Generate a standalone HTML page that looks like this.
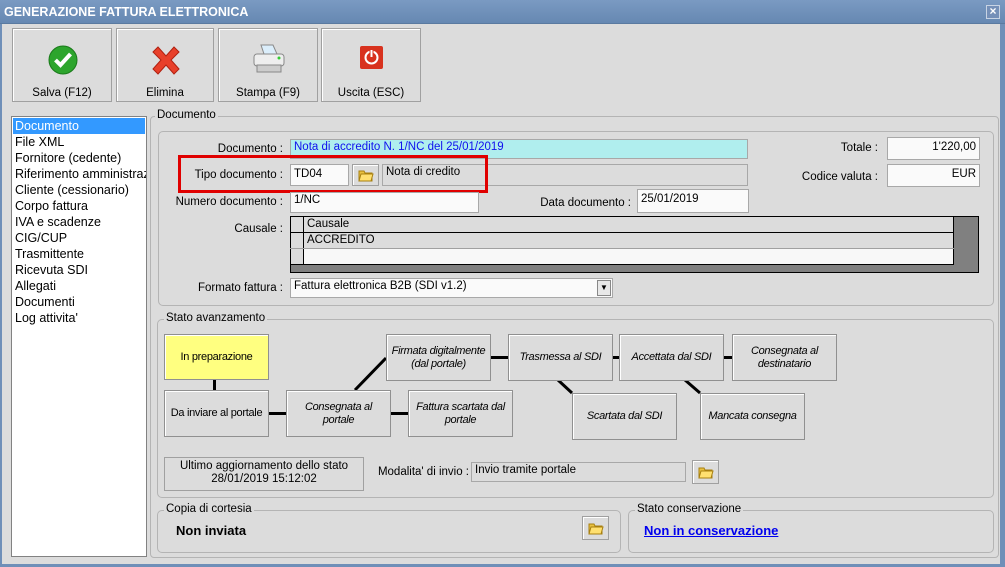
<!DOCTYPE html><html><head><meta charset="utf-8"><style>
*{box-sizing:border-box}body{margin:0;width:1005px;height:567px;overflow:hidden;background:#dcdcdc;font-family:"Liberation Sans",Tahoma,sans-serif;font-size:11.5px;color:#000;position:relative}
.a{position:absolute}
.btn{position:absolute;background:#dcdcdc;border:1px solid #a0a0a0;box-shadow:inset 1px 1px #fff;text-align:center}
.fld{position:absolute;background:#fafafa;border:1px solid #a8a8a8;padding:1px 3px;white-space:nowrap;overflow:hidden}
.lbl{position:absolute;text-align:right;white-space:nowrap}
.grp{position:absolute;border:1px solid #b4b4b4;border-radius:5px}
.gl{position:absolute;background:#dcdcdc;padding:0 2px;top:-8px;left:6px}
.st{position:absolute;background:#dcdcdc;border:1px solid #909090;box-shadow:inset 1px 1px #fff;display:flex;align-items:center;justify-content:center;text-align:center;font-style:italic;line-height:13px;font-size:11px;letter-spacing:-0.3px;white-space:nowrap}
.ln{position:absolute;background:#000}
.fb{position:absolute;background:#dcdcdc;border:1px solid #a0a0a0;box-shadow:inset 1px 1px #fff;display:flex;align-items:center;justify-content:center}
</style></head><body>
<div class="a" style="left:0;top:0;width:1005px;height:24px;background:linear-gradient(#7a9ac2,#6688b2);border-bottom:1px solid #5a7aa0"></div>
<div class="a" style="left:4px;top:5px;color:#fff;font-weight:bold;font-size:12.5px">GENERAZIONE FATTURA ELETTRONICA</div>
<div class="a" style="left:986px;top:5px;width:14px;height:14px;border:1px solid #c8d4e4;background:#7590b8;color:#fff;font-weight:bold;font-size:12px;line-height:11px;text-align:center">×</div>
<div class="a" style="left:1000px;top:24px;width:5px;height:543px;background:#6f8fb8"></div>
<div class="a" style="left:0;top:24px;width:2px;height:543px;background:#6f8fb8"></div>
<div class="a" style="left:0;top:564px;width:1005px;height:3px;background:#6f8fb8"></div>

<div class="btn" style="left:12px;top:28px;width:100px;height:74px"><svg class="a" style="left:35px;top:16px" width="30" height="30"><circle cx="15" cy="15" r="14" fill="#2da52d" stroke="#1a7a1a"/><path d="M7.5 15l5 5 10-11" stroke="#fff" stroke-width="4" fill="none"/></svg><div class="a" style="left:0;right:0;top:58px">Salva (F12)</div></div>
<div class="btn" style="left:116px;top:28px;width:98px;height:74px"><svg class="a" style="left:33px;top:15px" width="32" height="32"><path d="M3 8l5-5 8 9 8-9 5 5-8 8 8 9-5 5-8-9-8 9-5-5 8-9z" fill="#e8402a" stroke="#b02010"/></svg><div class="a" style="left:0;right:0;top:58px">Elimina</div></div>
<div class="btn" style="left:218px;top:28px;width:100px;height:74px"><svg class="a" style="left:33px;top:14px" width="34" height="32"><path d="M9 2h12l4 9H12z" fill="#dbeefb" stroke="#888"/><rect x="2" y="11" width="30" height="12" rx="3" fill="#eee" stroke="#888"/><rect x="5" y="22" width="24" height="7" fill="#ccc" stroke="#888"/><circle cx="27" cy="15" r="1.5" fill="#3c3"/></svg><div class="a" style="left:0;right:0;top:58px">Stampa (F9)</div></div>
<div class="btn" style="left:321px;top:28px;width:100px;height:74px"><svg class="a" style="left:38px;top:17px" width="23" height="23"><rect x="0" y="0" width="23" height="23" rx="2" fill="#d8321e"/><circle cx="11.5" cy="11.5" r="6" stroke="#fff" stroke-width="2" fill="none"/><path d="M11.5 4v7" stroke="#d8321e" stroke-width="4"/><path d="M11.5 4v7" stroke="#fff" stroke-width="2"/></svg><div class="a" style="left:0;right:0;top:58px">Uscita (ESC)</div></div>

<div class="a" style="left:11px;top:116px;width:136px;height:441px;background:#fff;border:1px solid #828282;line-height:16px;font-size:12.5px;padding-top:1px;overflow:hidden;white-space:nowrap">
<div style="background:#3399ff;color:#fff;margin:0 1px;padding-left:2px">Documento</div>
<div style="padding-left:3px">File XML<br>Fornitore (cedente)<br>Riferimento amministrazione<br>Cliente (cessionario)<br>Corpo fattura<br>IVA e scadenze<br>CIG/CUP<br>Trasmittente<br>Ricevuta SDI<br>Allegati<br>Documenti<br>Log attivita'</div></div>

<div class="grp" style="left:150px;top:116px;width:849px;height:442px;border-radius:4px"><div class="gl" style="left:4px">Documento</div></div>
<div class="grp" style="left:158px;top:131px;width:836px;height:175px"></div>
<div class="lbl" style="right:722px;top:143px">Documento :</div>
<div class="fld" style="left:290px;top:139px;width:458px;height:20px;background:#b0eeee;color:#1010ee">Nota di accredito N. 1/NC del 25/01/2019</div>
<div class="lbl" style="right:722px;top:169px">Tipo documento :</div>
<div class="fld" style="left:290px;top:164px;width:59px;height:22px;padding-top:3px">TD04</div>
<div class="fb" style="left:352px;top:164px;width:27px;height:22px"><svg width="16" height="14"><path d="M1 3h5l1 2h7v8H1z" fill="#e8c040" stroke="#a88010"/><path d="M3 6h12l-2 7H1z" fill="#ffe070" stroke="#a88010"/></svg></div>
<div class="fld" style="left:382px;top:164px;width:366px;height:22px;background:#dcdcdc">Nota di credito</div>
<div class="a" style="left:178px;top:155px;width:310px;height:38px;border:3px solid #e00000"></div>
<div class="lbl" style="right:722px;top:196px">Numero documento :</div>
<div class="fld" style="left:290px;top:192px;width:189px;height:21px">1/NC</div>
<div class="lbl" style="right:374px;top:197px">Data documento :</div>
<div class="fld" style="left:637px;top:189px;width:112px;height:24px;padding-top:3px">25/01/2019</div>
<div class="lbl" style="right:127px;top:142px">Totale :</div>
<div class="fld" style="left:887px;top:137px;width:93px;height:23px;text-align:right;padding-top:3px">1'220,00</div>
<div class="lbl" style="right:127px;top:171px">Codice valuta :</div>
<div class="fld" style="left:887px;top:164px;width:93px;height:23px;text-align:right;padding-top:3px">EUR</div>
<div class="lbl" style="right:722px;top:223px">Causale :</div>
<div class="a" style="left:290px;top:216px;width:689px;height:57px;background:#808080;border:1px solid #000"></div>
<div class="a" style="left:290px;top:216px;width:664px;height:49px;background:#dcdcdc;border:1px solid #000"></div>
<div class="a" style="left:303px;top:216px;width:1px;height:49px;background:#000"></div>
<div class="a" style="left:290px;top:232px;width:664px;height:1px;background:#000"></div>
<div class="a" style="left:290px;top:248px;width:664px;height:1px;background:#a0a0a0"></div>
<div class="a" style="left:304px;top:249px;width:649px;height:15px;background:#f8f8f8"></div>
<div class="a" style="left:307px;top:218px">Causale</div>
<div class="a" style="left:307px;top:234px">ACCREDITO</div>
<div class="lbl" style="right:722px;top:282px">Formato fattura :</div>
<div class="fld" style="left:290px;top:278px;width:323px;height:20px">Fattura elettronica B2B (SDI v1.2)</div>
<div class="a" style="left:597px;top:280px;width:14px;height:16px;border:1px solid #888;background:#e8e8e8;font-size:8px;text-align:center;line-height:14px">▼</div>

<div class="grp" style="left:157px;top:319px;width:837px;height:179px"><div class="gl">Stato avanzamento</div></div>
<div class="ln" style="left:213px;top:380px;width:3px;height:10px"></div>
<div class="ln" style="left:268px;top:412px;width:18px;height:3px"></div>
<div class="ln" style="left:390px;top:412px;width:18px;height:3px"></div>
<div class="ln" style="left:490px;top:356px;width:18px;height:3px"></div>
<div class="ln" style="left:612px;top:356px;width:7px;height:3px"></div>
<div class="ln" style="left:723px;top:356px;width:9px;height:3px"></div>
<svg class="a" style="left:0;top:0" width="1005" height="567"><path d="M355 390L386 358M558 380L572 393M685 380L700 393" stroke="#000" stroke-width="3"/></svg>
<div class="st" style="left:164px;top:334px;width:105px;height:46px;background:#ffff80;font-style:normal">In preparazione</div>
<div class="st" style="left:164px;top:390px;width:105px;height:47px;font-style:normal">Da inviare al portale</div>
<div class="st" style="left:286px;top:390px;width:105px;height:47px">Consegnata al<br>portale</div>
<div class="st" style="left:408px;top:390px;width:105px;height:47px">Fattura scartata dal<br>portale</div>
<div class="st" style="left:386px;top:334px;width:105px;height:47px">Firmata digitalmente<br>(dal portale)</div>
<div class="st" style="left:508px;top:334px;width:105px;height:47px">Trasmessa al SDI</div>
<div class="st" style="left:619px;top:334px;width:105px;height:47px">Accettata dal SDI</div>
<div class="st" style="left:732px;top:334px;width:105px;height:47px">Consegnata al<br>destinatario</div>
<div class="st" style="left:572px;top:393px;width:105px;height:47px">Scartata dal SDI</div>
<div class="st" style="left:700px;top:393px;width:105px;height:47px">Mancata consegna</div>
<div class="a" style="left:164px;top:457px;width:200px;height:34px;border:1px solid #a0a0a0;text-align:center;line-height:13px;padding-top:2px">Ultimo aggiornamento dello stato<br>28/01/2019 15:12:02</div>
<div class="lbl" style="right:536px;top:466px">Modalita' di invio :</div>
<div class="fld" style="left:471px;top:462px;width:215px;height:20px;background:#dcdcdc">Invio tramite portale</div>
<div class="fb" style="left:692px;top:460px;width:27px;height:24px"><svg width="16" height="14"><path d="M1 3h5l1 2h7v8H1z" fill="#e8c040" stroke="#a88010"/><path d="M3 6h12l-2 7H1z" fill="#ffe070" stroke="#a88010"/></svg></div>

<div class="grp" style="left:157px;top:510px;width:464px;height:43px"><div class="gl">Copia di cortesia</div></div>
<div class="a" style="left:176px;top:523px;font-weight:bold;font-size:13px">Non inviata</div>
<div class="fb" style="left:582px;top:516px;width:27px;height:24px"><svg width="16" height="14"><path d="M1 3h5l1 2h7v8H1z" fill="#e8c040" stroke="#a88010"/><path d="M3 6h12l-2 7H1z" fill="#ffe070" stroke="#a88010"/></svg></div>
<div class="grp" style="left:628px;top:510px;width:366px;height:43px"><div class="gl">Stato conservazione</div></div>
<div class="a" style="left:644px;top:523px;font-weight:bold;font-size:13px;color:#0000ee;text-decoration:underline">Non in conservazione</div>
</body></html>
